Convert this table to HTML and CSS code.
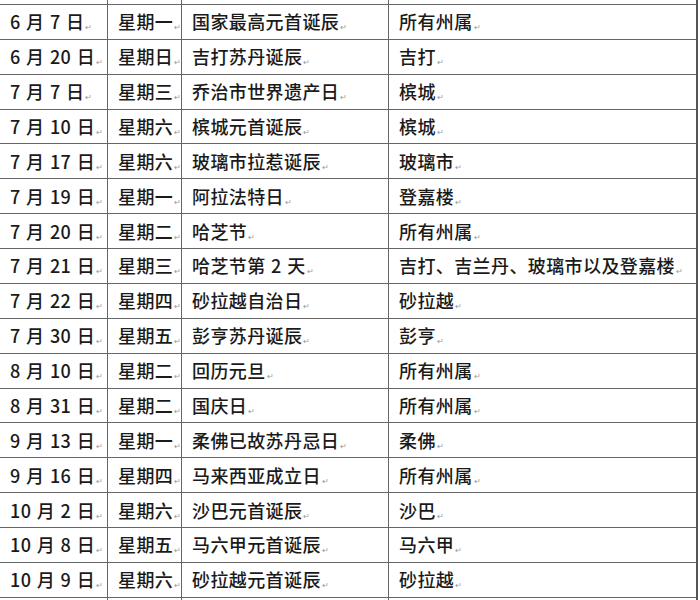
FILE: index.html
```html
<!DOCTYPE html>
<html lang="zh-CN">
<head>
<meta charset="utf-8">
<title>假期表</title>
<link rel="stylesheet" href="styles.css">
</head>
<body>
<table class="holidays">
  <colgroup>
    <col class="c-date"><col class="c-day"><col class="c-name"><col class="c-state"><col class="c-mark">
  </colgroup>
  <tbody>
    <tr class="cut"><td></td><td></td><td></td><td></td><td class="end"></td></tr>
    <tr><td>6 月 7 日<i>↵</i></td><td>星期一<i>↵</i></td><td>国家最高元首诞辰<i>↵</i></td><td>所有州属<i>↵</i></td><td class="end"><b></b></td></tr>
    <tr><td>6 月 20 日<i>↵</i></td><td>星期日<i>↵</i></td><td>吉打苏丹诞辰<i>↵</i></td><td>吉打<i>↵</i></td><td class="end"><b></b></td></tr>
    <tr><td>7 月 7 日<i>↵</i></td><td>星期三<i>↵</i></td><td>乔治市世界遗产日<i>↵</i></td><td>槟城<i>↵</i></td><td class="end"><b></b></td></tr>
    <tr><td>7 月 10 日<i>↵</i></td><td>星期六<i>↵</i></td><td>槟城元首诞辰<i>↵</i></td><td>槟城<i>↵</i></td><td class="end"><b></b></td></tr>
    <tr><td>7 月 17 日<i>↵</i></td><td>星期六<i>↵</i></td><td>玻璃市拉惹诞辰<i>↵</i></td><td>玻璃市<i>↵</i></td><td class="end"><b></b></td></tr>
    <tr><td>7 月 19 日<i>↵</i></td><td>星期一<i>↵</i></td><td>阿拉法特日<i>↵</i></td><td>登嘉楼<i>↵</i></td><td class="end"><b></b></td></tr>
    <tr><td>7 月 20 日<i>↵</i></td><td>星期二<i>↵</i></td><td>哈芝节<i>↵</i></td><td>所有州属<i>↵</i></td><td class="end"><b></b></td></tr>
    <tr><td>7 月 21 日<i>↵</i></td><td>星期三<i>↵</i></td><td>哈芝节第 2 天<i>↵</i></td><td>吉打、吉兰丹、玻璃市以及登嘉楼<i>↵</i></td><td class="end"><b></b></td></tr>
    <tr><td>7 月 22 日<i>↵</i></td><td>星期四<i>↵</i></td><td>砂拉越自治日<i>↵</i></td><td>砂拉越<i>↵</i></td><td class="end"><b></b></td></tr>
    <tr><td>7 月 30 日<i>↵</i></td><td>星期五<i>↵</i></td><td>彭亨苏丹诞辰<i>↵</i></td><td>彭亨<i>↵</i></td><td class="end"><b></b></td></tr>
    <tr><td>8 月 10 日<i>↵</i></td><td>星期二<i>↵</i></td><td>回历元旦<i>↵</i></td><td>所有州属<i>↵</i></td><td class="end"><b></b></td></tr>
    <tr><td>8 月 31 日<i>↵</i></td><td>星期二<i>↵</i></td><td>国庆日<i>↵</i></td><td>所有州属<i>↵</i></td><td class="end"><b></b></td></tr>
    <tr><td>9 月 13 日<i>↵</i></td><td>星期一<i>↵</i></td><td>柔佛已故苏丹忌日<i>↵</i></td><td>柔佛<i>↵</i></td><td class="end"><b></b></td></tr>
    <tr><td>9 月 16 日<i>↵</i></td><td>星期四<i>↵</i></td><td>马来西亚成立日<i>↵</i></td><td>所有州属<i>↵</i></td><td class="end"><b></b></td></tr>
    <tr><td>10 月 2 日<i>↵</i></td><td>星期六<i>↵</i></td><td>沙巴元首诞辰<i>↵</i></td><td>沙巴<i>↵</i></td><td class="end"><b></b></td></tr>
    <tr><td>10 月 8 日<i>↵</i></td><td>星期五<i>↵</i></td><td>马六甲元首诞辰<i>↵</i></td><td>马六甲<i>↵</i></td><td class="end"><b></b></td></tr>
    <tr><td>10 月 9 日<i>↵</i></td><td>星期六<i>↵</i></td><td>砂拉越元首诞辰<i>↵</i></td><td>砂拉越<i>↵</i></td><td class="end"><b></b></td></tr>
    <tr class="tail"><td></td><td></td><td></td><td></td><td class="end"></td></tr>
  </tbody>
</table>
</body>
</html>
```
FILE: styles.css
```css
html, body {
  margin: 0;
  padding: 0;
  background: #ffffff;
  overflow: hidden;
}

.holidays {
  border-collapse: collapse;
  table-layout: fixed;
  width: 703px;
  margin-top: -31px;
  margin-left: -1px;
  font-family: "Noto Sans CJK SC", "Noto Sans", sans-serif;
  font-size: 18px;
  font-weight: 500;
  color: #1a1a1a;
}

.c-date { width: 108px; }
.c-day { width: 74px; }
.c-name { width: 207px; }
.c-state { width: 308px; }
.c-mark { width: 6px; }

.holidays td {
  height: 34.875px;
  padding: 0 0 0 10px;
  box-sizing: border-box;
  border: 1.5px solid #666666;
  vertical-align: middle;
  white-space: nowrap;
  line-height: 1;
  letter-spacing: 0.4px;
  word-spacing: 1px;
}

.holidays td:nth-child(4) {
  border-right: 2px solid #555555;
}

.holidays td.end {
  border: none;
  padding: 0 0 0 2px;
  line-height: 0;
}

.holidays td.end b {
  display: inline-block;
  width: 2px;
  height: 3px;
  margin-top: 2px;
  background: #8a8a8a;
}

.holidays .tail td {
  height: 4px;
}

.holidays i {
  font-style: normal;
  font-weight: 400;
  font-size: 8px;
  color: #9a9a9a;
  margin-left: 1px;
  vertical-align: -1px;
  letter-spacing: 0;
}
```
